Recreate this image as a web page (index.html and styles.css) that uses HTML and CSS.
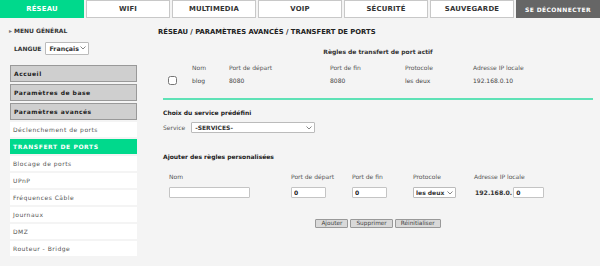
FILE: index.html
```html
<!DOCTYPE html>
<html lang="fr">
<head>
    <meta charset="UTF-8">
    <meta name="viewport" content="width=device-width, initial-scale=1.0">
    <title>Transfert de ports</title>
    <link rel="stylesheet" href="styles.css">
</head>
<body>

<nav class="tabs">
    <a class="tab active">RÉSEAU</a>
    <a class="tab">WIFI</a>
    <a class="tab">MULTIMEDIA</a>
    <a class="tab">VOIP</a>
    <a class="tab">SÉCURITÉ</a>
    <a class="tab">SAUVEGARDE</a>
    <a class="tab logout">SE DÉCONNECTER</a>
</nav>

<div class="page">
    <aside class="sidebar">
        <div class="menu-title"><span class="arrow">&#9656;</span>MENU GÉNÉRAL</div>
        <div class="lang">
            <label for="lang">LANGUE</label>
            <span class="select-wrap lang-wrap">
                <select id="lang"><option>Français</option></select>
                <svg class="chev" width="6" height="4" viewBox="0 0 6 4"><path d="M0.5 0.5 L3 3 L5.5 0.5" fill="none" stroke="#666" stroke-width="0.8"/></svg>
            </span>
        </div>
        <ul class="side-menu">
            <li class="group">Accueil</li>
            <li class="group">Paramètres de base</li>
            <li class="group">Paramètres avancés</li>
            <li class="link">Déclenchement de ports</li>
            <li class="link current">TRANSFERT DE PORTS</li>
            <li class="link">Blocage de ports</li>
            <li class="link">UPnP</li>
            <li class="link">Fréquences Câble</li>
            <li class="link">Journaux</li>
            <li class="link">DMZ</li>
            <li class="link">Routeur - Bridge</li>
        </ul>
    </aside>

    <main class="content">
        <h1>RÉSEAU / PARAMÈTRES AVANCÉS / TRANSFERT DE PORTS</h1>

        <div class="panel">
            <div class="caption">Règles de transfert de port actif</div>
            <div class="rules-grid">
                <span></span>
                <span class="head">Nom</span>
                <span class="head">Port de départ</span>
                <span class="head">Port de fin</span>
                <span class="head">Protocole</span>
                <span class="head">Adresse IP locale</span>

                <span><input type="checkbox" class="check"></span>
                <span>blog</span>
                <span>8080</span>
                <span>8080</span>
                <span>les deux</span>
                <span>192.168.0.10</span>
            </div>

            <div class="sep"></div>

            <h2>Choix du service prédéfini</h2>
            <div class="service-row">
                <label for="service">Service</label>
                <span class="select-wrap service-wrap">
                    <select id="service"><option>-SERVICES-</option></select>
                    <svg class="chev" width="6" height="4" viewBox="0 0 6 4"><path d="M0.5 0.5 L3 3 L5.5 0.5" fill="none" stroke="#666" stroke-width="0.8"/></svg>
                </span>
            </div>

            <h2 class="add-title">Ajouter des règles personalisées</h2>
            <div class="add-grid">
                <span class="head">Nom</span>
                <span class="head">Port de départ</span>
                <span class="head">Port de fin</span>
                <span class="head">Protocole</span>
                <span class="head">Adresse IP locale</span>

                <span><input type="text" class="field name-field"></span>
                <span><input type="text" class="field port-field" value="0"></span>
                <span><input type="text" class="field port-field" value="0"></span>
                <span>
                    <span class="select-wrap proto-wrap">
                        <select><option>les deux</option></select>
                        <svg class="chev" width="6" height="4" viewBox="0 0 6 4"><path d="M0.5 0.5 L3 3 L5.5 0.5" fill="none" stroke="#666" stroke-width="0.8"/></svg>
                    </span>
                </span>
                <span class="ip"><b>192.168.0.</b><input type="text" class="field ip-field" value="0"></span>
            </div>

            <div class="buttons">
                <button>Ajouter</button>
                <button>Supprimer</button>
                <button>Réinitialiser</button>
            </div>
        </div>
    </main>
</div>

</body>
</html>
```

FILE: styles.css
```css
* {
    box-sizing: border-box;
}
body {
    margin: 0;
    background-color: #f4f4f4;
    font-family: "DejaVu Sans", Verdana, sans-serif;
    font-size: 6px;
    color: #444;
}

/* top tabs */
.tabs {
    display: flex;
    gap: 2px;
    height: 18px;
}
.tab {
    flex: 1;
    display: flex;
    align-items: center;
    justify-content: center;
    background: #fff;
    border: 1px solid #c8c8c8;
    font-weight: bold;
    font-size: 6.9px;
    letter-spacing: 0.2px;
    color: #333;
}
.tab.active {
    background: #00d98c;
    border-color: #00d98c;
    color: #fff;
}
.tab.logout {
    background: #666;
    border-color: #666;
    color: #fff;
    font-size: 6px;
    letter-spacing: 0.4px;
}

.page {
    display: flex;
}

/* left menu */
.sidebar {
    width: 137px;
    padding-left: 10px;
    flex-shrink: 0;
}
.menu-title {
    margin-top: 9px;
    height: 8px;
    line-height: 8px;
    font-weight: bold;
    font-size: 6px;
    color: #333;
    display: flex;
    align-items: center;
}
.arrow {
    color: #777;
    font-size: 6px;
    margin-left: -1px;
    margin-right: 2px;
}
.lang {
    margin-top: 6px;
    display: flex;
    align-items: center;
    height: 14px;
    padding-left: 4px;
    gap: 4px;
}
.lang label {
    font-weight: bold;
    color: #333;
}
.select-wrap {
    position: relative;
    display: inline-block;
}
.select-wrap select {
    appearance: none;
    -webkit-appearance: none;
    display: block;
    margin: 0;
    background: #fff;
    border: 1px solid #bbb;
    border-radius: 1px;
    font-family: "DejaVu Sans", Verdana, sans-serif;
    font-weight: bold;
    color: #333;
    padding: 0 0 0 3px;
}
.chev {
    position: absolute;
    right: 3px;
    top: 50%;
    margin-top: -2px;
}
.lang-wrap select {
    width: 44px;
    height: 13px;
    font-size: 6.3px;
}
.side-menu {
    list-style: none;
    margin: 10px 0 0;
    padding: 0;
}
.side-menu li {
    height: 15px;
    line-height: 15px;
    margin-bottom: 2px;
    padding-left: 3px;
    letter-spacing: 0.5px;
    font-size: 6px;
}
.side-menu .group {
    height: 17px;
    line-height: 15px;
    background: #cfcfcf;
    border: 1px solid #999;
    font-weight: bold;
    color: #222;
}
.side-menu .link {
    background: #fff;
    color: #555;
}
.side-menu .current {
    background: #00d98c;
    color: #fff;
    font-weight: bold;
    letter-spacing: 0.6px;
}

/* main area */
.content {
    flex: 1;
    padding: 10px 7px 0 21px;
}
h1 {
    margin: 0;
    font-size: 6.8px;
    line-height: 9px;
    color: #222;
}
.panel {
    margin-left: 5px;
}
.caption {
    margin-top: 11px;
    text-align: center;
    font-weight: bold;
    line-height: 8px;
    color: #333;
}
.rules-grid {
    margin-top: 5px;
    display: grid;
    grid-template-columns: 29px 37px 101px 75px 68px auto;
    grid-template-rows: 12px 14px;
    align-items: center;
}
.head {
    color: #555;
}
.check {
    margin: 1px 0 0 5px;
    width: 9px;
    height: 9px;
    display: block;
}
.sep {
    margin-top: 11px;
    height: 2px;
    background: #5ee2b6;
}
h2 {
    margin: 9px 0 0;
    font-size: 6px;
    line-height: 8px;
    color: #222;
}
.service-row {
    margin-top: 5px;
    display: flex;
    align-items: center;
    gap: 6px;
    height: 11px;
}
.service-row label {
    color: #555;
}
.service-wrap select {
    width: 124px;
    height: 11px;
    font-size: 6px;
}
h2.add-title {
    margin-top: 20px;
}
.add-grid {
    margin: 11px 0 0 6px;
    display: grid;
    grid-template-columns: 122px 61px 61px 61px auto;
    grid-template-rows: 8px 11px;
    row-gap: 7px;
    align-items: center;
}
.field {
    display: block;
    height: 11px;
    margin: 0;
    border: 1px solid #c4c4c4;
    border-radius: 1px;
    background: #fff;
    font-family: "DejaVu Sans", Verdana, sans-serif;
    font-size: 6px;
    font-weight: bold;
    color: #222;
    padding: 0 2px;
}
.name-field {
    width: 81px;
}
.port-field {
    width: 35px;
}
.proto-wrap select {
    width: 43px;
    height: 11px;
    font-size: 6px;
    padding-left: 2px;
}
.ip {
    display: flex;
    align-items: center;
    gap: 1px;
    padding-left: 1px;
}
.ip b {
    color: #333;
    font-size: 6.2px;
}
.ip-field {
    width: 31px;
}
.buttons {
    margin-top: 21px;
    display: flex;
    justify-content: center;
    gap: 2px;
}
button {
    height: 9px;
    padding: 0 5px;
    border: 1px solid #999;
    border-radius: 1px;
    background: #d9d9d9;
    font-family: "DejaVu Sans", Verdana, sans-serif;
    font-size: 5.8px;
    line-height: 7px;
    color: #444;
}
```
